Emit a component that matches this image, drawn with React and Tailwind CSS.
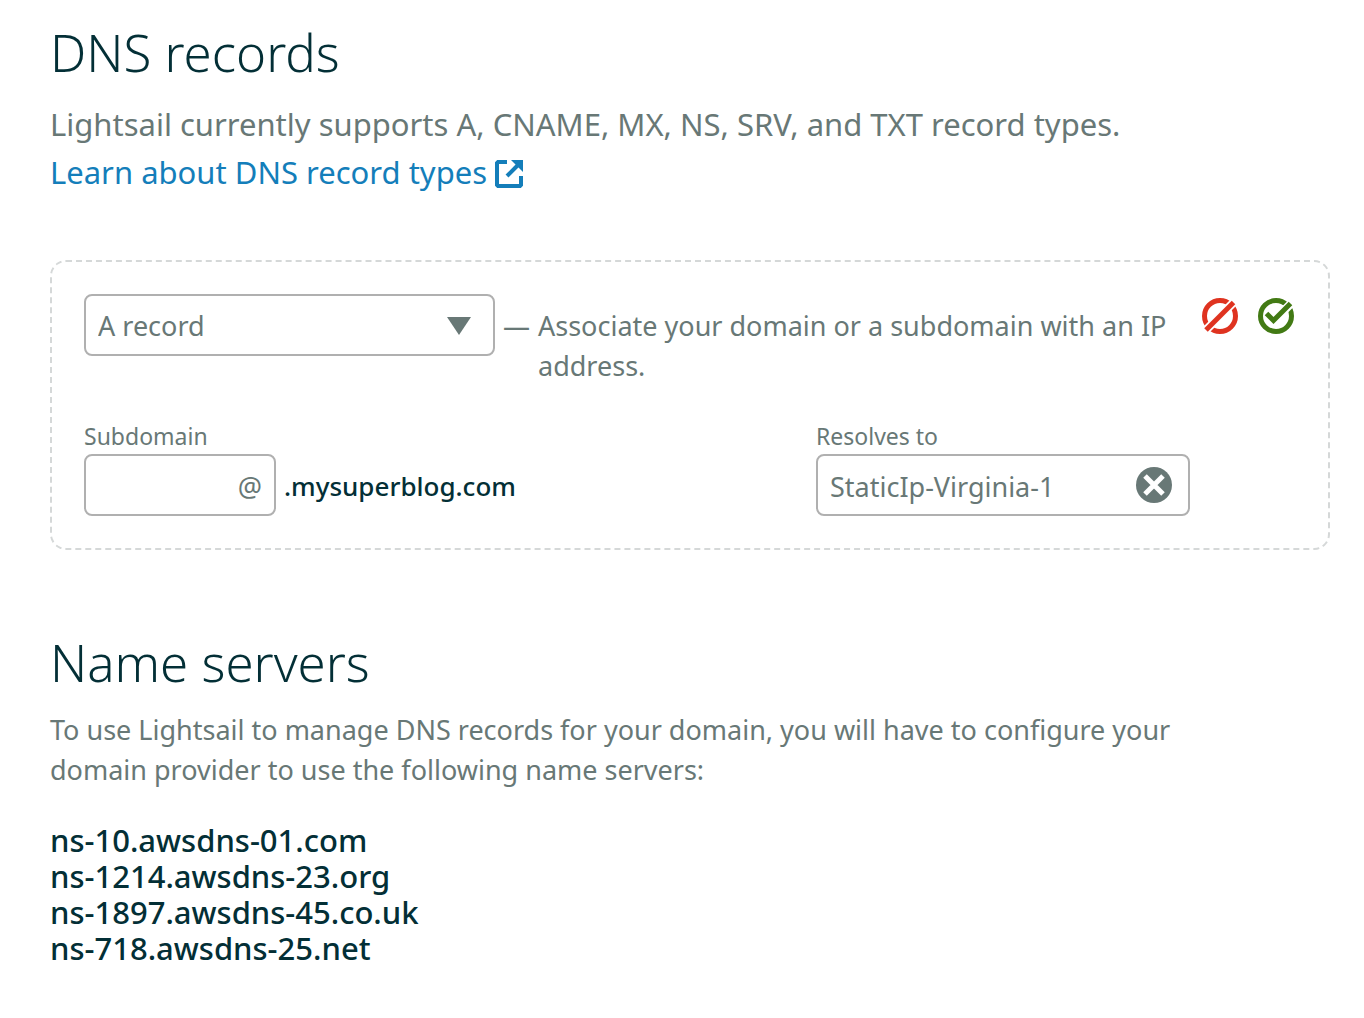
import { useState } from 'react';

const nameServers = [
  'ns-10.awsdns-01.com',
  'ns-1214.awsdns-23.org',
  'ns-1897.awsdns-45.co.uk',
  'ns-718.awsdns-25.net',
];

const ExternalIcon = () => (
  <svg className="mt-1 h-7 w-7 shrink-0" viewBox="0 0 28 28" fill="none" stroke="currentColor" strokeWidth="4" aria-hidden="true">
    <path d="M12 2H3L2 3V25L3 26H25L26 25V16" />
    <path d="M12 16L24 4" />
    <path d="M16 0H28V12Z" fill="currentColor" stroke="none" />
  </svg>
);

const CancelIcon = () => (
  <svg className="h-9 w-9" viewBox="0 0 36 36" fill="none" aria-hidden="true">
    <circle cx="18" cy="18" r="15.5" stroke="#df3320" strokeWidth="5" />
    <path d="M1 35L35 1" stroke="#fff" strokeWidth="8.5" />
    <path d="M4 32L31.500 4.500" stroke="#df3320" strokeWidth="5" />
  </svg>
);

const SaveIcon = () => (
  <svg className="h-9 w-9" viewBox="0 0 36 36" fill="none" aria-hidden="true">
    <circle cx="18" cy="18" r="15.5" stroke="#427a14" strokeWidth="5" />
    <path d="M16 22.500L36 2.500" stroke="#fff" strokeWidth="8.5" />
    <path d="M8.500 15.500L15.500 22.500L32.500 5.500" stroke="#427a14" strokeWidth="5" />
  </svg>
);

const ClearIcon = () => (
  <svg className="h-9 w-9" viewBox="0 0 36 36" fill="none" aria-hidden="true">
    <circle cx="18" cy="18" r="18" fill="#687876" />
    <path d="M9 9L27 27M27 9L9 27" stroke="#fff" strokeWidth="5" />
  </svg>
);

const App = () => {
  const [recordType, setRecordType] = useState('A');
  const [subdomain, setSubdomain] = useState('');
  const [target, setTarget] = useState('StaticIp-Virginia-1');

  return (
    <main className="min-h-screen bg-white pt-5 pr-[34px] pb-12 pl-[50px] font-['Noto_Sans','Open_Sans',sans-serif] text-[#687876]">
      {/* DNS records */}
      <section>
        <h1 className="text-[51px] leading-16 font-light text-[#032f36]">DNS records</h1>
        <p className="mt-4 text-[31px] leading-12">
          Lightsail currently supports A, CNAME, MX, NS, SRV, and TXT record types.
        </p>
        <a href="#record-types" className="flex items-center gap-2 text-[31px] leading-12 text-[#147eba]">
          Learn about DNS record types
          <ExternalIcon />
        </a>

        <form
          className="mt-16 rounded-2xl border-2 border-dashed border-[#d5d8d8] p-8"
          onSubmit={(e) => e.preventDefault()}
        >
          <div className="flex items-start">
            <div className="relative w-[411px] shrink-0">
              <select
                aria-label="Record type"
                value={recordType}
                onChange={(e) => setRecordType(e.target.value)}
                className="h-[62px] w-full appearance-none rounded-lg border-2 border-[#b0b0b0] bg-white px-3 pt-0.5 text-[27px]"
              >
                <option value="A">A record</option>
                <option value="CNAME">CNAME record</option>
                <option value="MX">MX record</option>
                <option value="NS">NS record</option>
                <option value="SRV">SRV record</option>
                <option value="TXT">TXT record</option>
              </select>
              <svg className="pointer-events-none absolute top-[23px] right-6 h-[18px] w-6" viewBox="0 0 24 18" aria-hidden="true">
                <path d="M0 0H24L12 18Z" fill="#687876" />
              </svg>
            </div>
            <span className="ml-2 shrink-0 pt-3 text-[27px] leading-10">—</span>
            <p className="ml-2 flex-1 pt-3 text-[27px] leading-10">
              Associate your domain or a subdomain with an IP address.
            </p>
            <div className="ml-8 flex shrink-0 gap-5 pt-1 pr-0.5">
              <button type="button" aria-label="Cancel">
                <CancelIcon />
              </button>
              <button type="submit" aria-label="Save">
                <SaveIcon />
              </button>
            </div>
          </div>

          <div className="mt-8 flex justify-between pr-[106px]">
            <div>
              <label htmlFor="subdomain" className="block text-[23px] leading-9">Subdomain</label>
              <div className="flex items-center gap-2">
                <input
                  id="subdomain"
                  type="text"
                  placeholder="@"
                  value={subdomain}
                  onChange={(e) => setSubdomain(e.target.value)}
                  className="h-[62px] w-48 rounded-lg border-2 border-[#b0b0b0] px-3 pt-0.5 text-right text-[27px] placeholder:text-[#687876]"
                />
                <span className="pt-0.5 text-[26px] font-medium text-[#032f36]">.mysuperblog.com</span>
              </div>
            </div>
            <div>
              <label htmlFor="target" className="block text-[23px] leading-9">Resolves to</label>
              <div className="relative">
                <input
                  id="target"
                  type="text"
                  value={target}
                  onChange={(e) => setTarget(e.target.value)}
                  className="h-[62px] w-[374px] rounded-lg border-2 border-[#b0b0b0] pt-0.5 pr-16 pl-3 text-[27px]"
                />
                <button type="button" aria-label="Clear" onClick={() => setTarget('')} className="absolute top-[13px] right-[18px]">
                  <ClearIcon />
                </button>
              </div>
            </div>
          </div>
        </form>
      </section>

      {/* Name servers */}
      <section className="mt-20">
        <h2 className="text-[51px] leading-16 font-light text-[#032f36]">Name servers</h2>
        <p className="mt-4 max-w-[1180px] text-[27px] leading-10">
          To use Lightsail to manage DNS records for your domain, you will have to configure your domain provider to use the following name servers:
        </p>
        <ul className="mt-8 text-[31px] leading-9 font-medium text-[#032f36]">
          {nameServers.map((server) => (
            <li key={server}>{server}</li>
          ))}
        </ul>
      </section>
    </main>
  );
};

export default App;
